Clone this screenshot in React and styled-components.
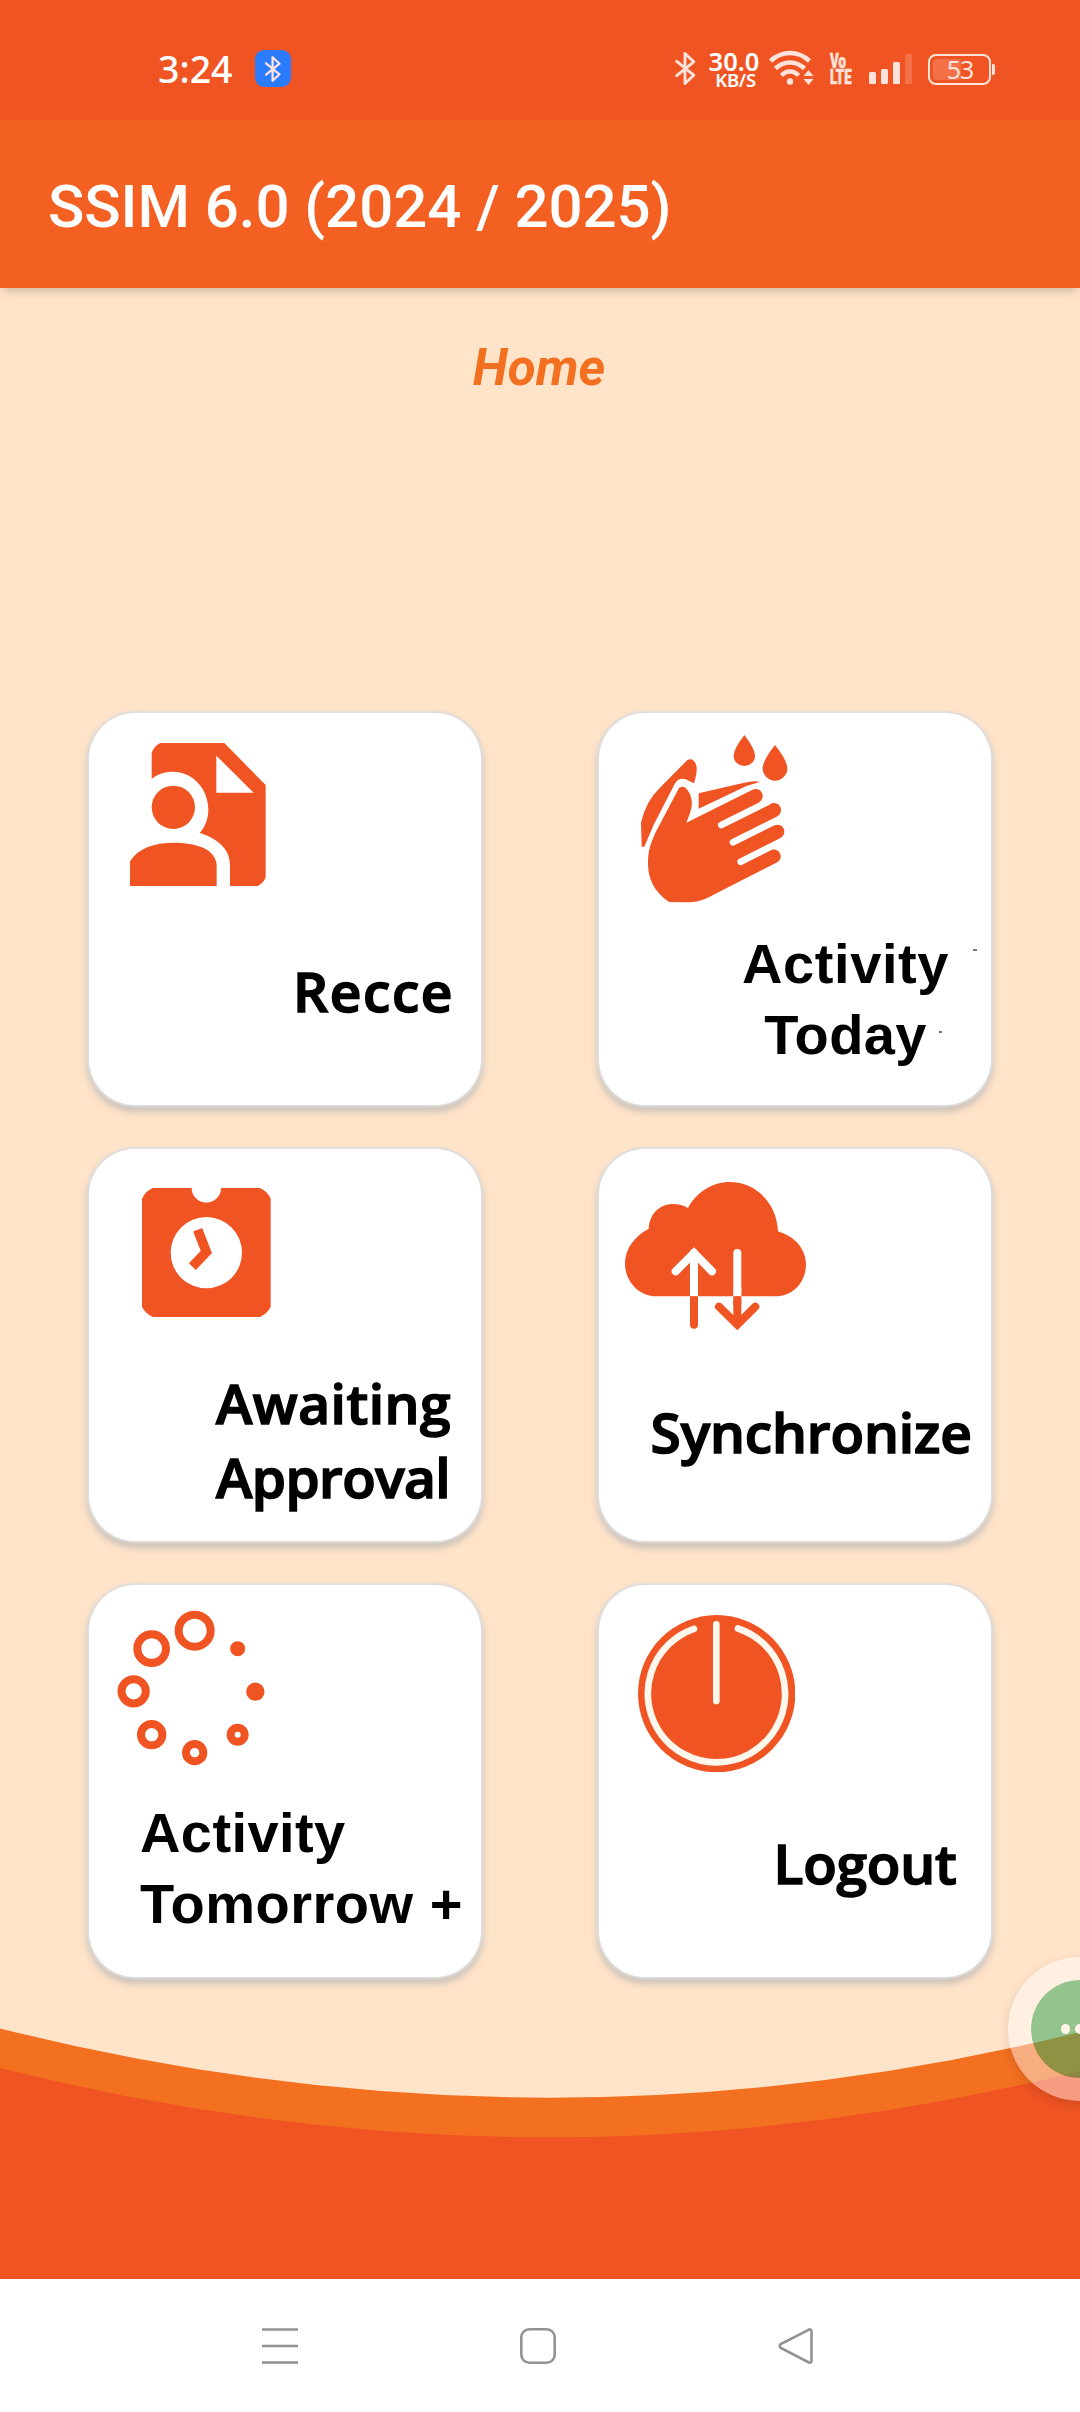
import styled, { createGlobalStyle } from "styled-components";

const RED = "#f05423";

const tiles = [
  {
    icon: RecceIcon,
    iconX: 41,
    iconY: 30,
    x: 204,
    y: 240.5,
    lines: [{ text: "Recce", spacing: 1.6 }],
  },
  {
    icon: HandsIcon,
    iconX: 41,
    iconY: 21,
    x: 143,
    y: 214.5,
    arial: true,
    center: true,
    specks: true,
    lines: [
      { text: "Activity", spacing: 0.6 },
      { text: "Today", spacing: 0.4 },
    ],
  },
  {
    icon: ApprovalIcon,
    iconX: 53,
    iconY: 39,
    x: 127,
    y: 216.5,
    lines: [
      { text: "Awaiting", spacing: 0.5 },
      { text: "Approval", spacing: -0.6 },
    ],
  },
  {
    icon: CloudIcon,
    iconX: 26,
    iconY: 33,
    x: 51.5,
    y: 245.5,
    lines: [{ text: "Synchronize", spacing: -0.1 }],
  },
  {
    icon: DotsIcon,
    iconX: 28,
    iconY: 25,
    x: 51,
    y: 211.5,
    arial: true,
    lines: [
      { text: "Activity", spacing: 0.4 },
      { text: "Tomorrow +", spacing: 0.5 },
    ],
  },
  {
    icon: PowerIcon,
    iconX: 39,
    iconY: 30,
    x: 174.5,
    y: 240.5,
    lines: [{ text: "Logout", spacing: -0.2 }],
  },
];

export default function App() {
  return (
    <Screen>
      <GlobalStyle />
      <StatusBar />
      <AppBar>SSIM 6.0 (2024 / 2025)</AppBar>
      <Main>
        <Heading>Home</Heading>
        <Grid>
          {tiles.map((tile, i) => {
            const Icon = tile.icon;
            return (
              <Tile key={i}>
                <IconBox $x={tile.iconX} $y={tile.iconY}>
                  <Icon />
                </IconBox>
                <Label
                  $x={tile.x}
                  $y={tile.y}
                  $arial={tile.arial}
                  $center={tile.center}
                >
                  {tile.lines.map((line) => (
                    <Line key={line.text} $spacing={line.spacing}>
                      {line.text}
                    </Line>
                  ))}
                </Label>
                {tile.specks && (
                  <>
                    <Speck $x={374} $y={236} $w={4} />
                    <Speck $x={340} $y={318} $w={3} />
                  </>
                )}
              </Tile>
            );
          })}
        </Grid>
        <Wave viewBox="0 0 1080 251">
          <path d="M0 0.5Q545 137 1080 4V251H0Z" fill="#f37021" />
          <path d="M0 40Q545 177 1080 43V251H0Z" fill={RED} />
        </Wave>
      </Main>
      <NavBar>
        <svg width="36" height="36" viewBox="0 0 36 36">
          <path d="M0 1.5H36M0 18H36M0 34.5H36" />
        </svg>
        <svg width="36" height="36" viewBox="0 0 36 36">
          <rect x="1.3" y="1.3" width="33.4" height="33.4" rx="8" />
        </svg>
        <svg width="36" height="36" viewBox="0 0 36 36">
          <path d="M30.5 1.8L2.8 16Q0.8 18 2.8 20L30.5 34.2Q33.5 35.5 33.5 32.5V3.5Q33.5 0.5 30.5 1.8Z" />
        </svg>
      </NavBar>
      <Bubble>
        <i />
        <i />
        <i />
      </Bubble>
    </Screen>
  );
}

function StatusBar() {
  return (
    <Status>
      <Clock>3:24</Clock>
      <Badge>
        <svg width="18" height="26" viewBox="0 0 20 32">
          <BluetoothPath />
        </svg>
      </Badge>
      <Tray>
        <svg width="21" height="33" viewBox="0 0 20 32">
          <BluetoothPath />
        </svg>
        <Speed>
          <b>30.0</b>
          <span>KB/S</span>
        </Speed>
        <svg width="46" height="36" viewBox="0 0 46 36">
          <g fill="none" stroke="#ffe3da" strokeWidth="4.6">
            <path d="M1.5 11Q10 3 21 3T40.5 11" />
            <path d="M6.5 18.5Q13 12.5 21 12.5T35.5 18.5" />
            <path d="M12.5 25.5Q16 21.5 21 21.5T29.5 25.5" />
          </g>
          <circle cx="21" cy="31.5" r="3.2" fill="#ffe3da" />
          <path d="M39.5 20L44.5 26H34.5ZM39.5 35L44.5 29H34.5Z" fill="#ffe3da" />
        </svg>
        <Volte>
          <span>Vo</span>
          <span>LTE</span>
        </Volte>
        <Bars>
          <Bar $h={12} />
          <Bar $h={15} />
          <Bar $h={22} />
          <Bar $h={30} $off />
        </Bars>
        <Battery>
          <Charge>53</Charge>
        </Battery>
        <Nub />
      </Tray>
    </Status>
  );
}

function BluetoothPath() {
  return (
    <path
      d="M1.5 9L18 22.5L9.5 30.5V1.5L18 9.5L1.5 23"
      fill="none"
      stroke="#ffe3da"
      strokeWidth="2.8"
      strokeLinejoin="round"
      strokeLinecap="round"
    />
  );
}

function RecceIcon() {
  return (
    <svg width="136" height="143.3" viewBox="181 130 408 430" fill={RED}>
      <path
        fillRule="evenodd"
        d="M246 160Q252 140 272 130H464L588 256V532Q582 552 562 560H481V495C481 440 430 412 390 400C425 360 422 305 397 265C362 210 290 202 246 238ZM440 168V279H552Z"
      />
      <circle cx="311" cy="323" r="65" />
      <path d="M181 560V485C205 445 255 429 311 429C380 429 441 448 441 500V560Z" />
    </svg>
  );
}

function HandsIcon() {
  return (
    <svg width="147.7" height="169" viewBox="181 100 443 507" fill={RED}>
      <path d="M494 103Q526 145 526 165A32 31 0 0 1 462 165Q462 145 494 103Z" />
      <path d="M586 133Q623 180 623 203A37 37 0 0 1 549 203Q549 180 586 133Z" />
      <path d="M324 177Q343 170 350 195Q354 212 343 248L318 236Q296 230 285 250L222 372L194 438H186L184 365Q200 300 240 262Z" />
      <path d="M357 278L490 247Q525 239 540 244L500 256L357 324Z" />
      <path d="M298 262Q314 250 328 275C344 305 335 330 320 366L518.6 267.2A21 21 0 0 1 537.4 304.8L573.6 309.2A21 21 0 0 1 592.4 346.8L583.6 374.2A21 21 0 0 1 602.4 411.8L572.6 448.2A21 21 0 0 1 591.4 485.8L400 583C370 600 350 605 320 605L268 604C225 575 205 535 205 490C205 450 212 430 228 395Z" />
      <path
        d="M425 373L565 303M460 425L622 344M483 483L622 413.5"
        fill="none"
        stroke="#fff"
        strokeWidth="20"
        strokeLinecap="round"
      />
    </svg>
  );
}

function ApprovalIcon() {
  return (
    <svg width="128.7" height="129" viewBox="217 158 386 387" fill={RED}>
      <path d="M250 158H366A44 44 0 0 0 454 158H570Q592 166 603 190V515Q592 536 570 545H250Q228 536 217 515V190Q228 166 250 158Z" />
      <circle cx="410" cy="352" r="107" fill="#fff" />
      <path
        d="M384 283L410 350L368 394"
        fill="none"
        stroke={RED}
        strokeWidth="29"
      />
    </svg>
  );
}

function CloudIcon() {
  return (
    <svg width="181.3" height="148" viewBox="136 140 544 444" fill="none">
      <path
        d="M230 483C175 483 136 435 136 385C136 340 165 303 207 280C210 230 245 206 280 206Q305 206 325 218C350 170 400 140 450 140C530 140 592 205 595 288C650 305 679 345 679 387C679 440 640 483 588 483Z"
        fill={RED}
      />
      <g strokeWidth="24" strokeLinecap="round">
        <path d="M343 495V568M473 495V560M418 514L473 568L527 514" stroke={RED} />
        <path d="M288 408L343 353L397 408" stroke="#fff" />
        <path d="M343 353V470M473 353V470" stroke="#fff" />
      </g>
      <path d="M343 460V483M473 460V483" stroke="#fff" strokeWidth="24" />
      <path d="M343 483V510M473 483V510" stroke={RED} strokeWidth="24" />
    </svg>
  );
}

function DotsIcon() {
  return (
    <svg
      width="149"
      height="156"
      viewBox="142 119 447 468"
      fill="none"
      stroke={RED}
      strokeWidth="24"
    >
      <circle cx="375" cy="181" r="48" />
      <circle cx="246" cy="235" r="43" />
      <circle cx="192" cy="363" r="36.5" />
      <circle cx="246" cy="493" r="32" />
      <circle cx="375" cy="547" r="26" />
      <circle cx="504" cy="493" r="21" />
      <circle cx="557" cy="364" r="14" strokeWidth="27" />
      <circle cx="504" cy="235" r="11" strokeWidth="23" />
    </svg>
  );
}

function PowerIcon() {
  return (
    <svg width="157.3" height="157.3" viewBox="175 135 472 472" fill="none">
      <circle cx="411" cy="371" r="236" fill={RED} />
      <path
        d="M343 176.5A206 206 0 1 0 475 175.5M410 163V393"
        stroke="#fff6ec"
        strokeWidth="20"
        strokeLinecap="round"
      />
    </svg>
  );
}

const GlobalStyle = createGlobalStyle`
  body {
    margin: 0;
  }
  svg {
    display: block;
    flex-shrink: 0;
  }
`;

const Screen = styled.div`
  position: relative;
  display: flex;
  flex-direction: column;
  width: 1080px;
  height: 2412px;
  overflow: hidden;
  background: #fff;
  font-family: Roboto, sans-serif;
`;

const Status = styled.div`
  display: flex;
  align-items: flex-start;
  box-sizing: border-box;
  height: 120px;
  padding: 50px 85px 0 158px;
  background: ${RED};
  color: #fff;
`;

const Clock = styled.div`
  width: 97px;
  font-family: "Noto Sans", sans-serif;
  font-size: 37.5px;
  font-weight: 500;
  line-height: 37px;
`;

const Badge = styled.div`
  display: flex;
  align-items: center;
  justify-content: center;
  width: 36px;
  height: 37px;
  border-radius: 9px;
  background: #2b7bff;
`;

const Tray = styled.div`
  display: flex;
  align-items: flex-start;
  margin-left: auto;

  & > svg:first-child {
    margin: 2px 12px 0 0;
  }
`;

const Speed = styled.div`
  display: flex;
  flex-direction: column;
  align-items: center;
  width: 52px;
  margin-right: 9px;
  font-family: "Noto Sans", sans-serif;
  white-space: nowrap;

  & b {
    font-size: 25.5px;
    font-weight: 600;
    line-height: 23px;
  }
  & span {
    padding-left: 3px;
    font-size: 18.5px;
    font-weight: 600;
    line-height: 14px;
    letter-spacing: -0.3px;
  }
`;

const Volte = styled.div`
  display: flex;
  flex-direction: column;
  width: 22px;
  margin: 3px 17px 0 15px;
  color: #ffe3da;
  font-size: 20px;
  font-weight: 900;
  line-height: 16px;
  -webkit-text-stroke: 0.6px #ffe3da;
  transform: scaleX(0.66);
  transform-origin: left;
`;

const Bars = styled.div`
  display: flex;
  align-items: flex-end;
  gap: 5px;
  height: 34px;
  margin-right: 16px;
`;

const Bar = styled.div`
  width: 7px;
  height: ${(p) => p.$h}px;
  border-radius: 1.5px;
  background: ${(p) => (p.$off ? "#f4714a" : "#ffe3da")};
`;

const Battery = styled.div`
  box-sizing: border-box;
  width: 63px;
  height: 31px;
  margin-top: 4px;
  padding: 3px;
  border: 2px solid #ffe3da;
  border-radius: 8px;
`;

const Charge = styled.div`
  height: 21px;
  padding-left: 1px;
  border-radius: 4px;
  background: linear-gradient(90deg, #f37048 53%, transparent 53%);
  color: #ffe3da;
  font-family: "Noto Sans", sans-serif;
  font-size: 25px;
  line-height: 20px;
  text-align: center;
  letter-spacing: -1px;
`;

const Nub = styled.div`
  width: 3px;
  height: 11px;
  margin: 14px 0 0 1px;
  border-radius: 0 2px 2px 0;
  background: #ffe3da;
`;

const AppBar = styled.div`
  z-index: 1;
  height: 168px;
  padding-left: 48px;
  background: #f36022;
  box-shadow: 0 6px 9px -3px rgba(0, 0, 0, 0.2);
  color: #fff;
  font-size: 60px;
  font-weight: 500;
  line-height: 173px;
  letter-spacing: -0.05px;
`;

const Main = styled.div`
  display: flex;
  flex-direction: column;
  align-items: center;
  height: 1991px;
  background: #ffe4ca;
`;

const Heading = styled.div`
  height: 425px;
  padding-right: 2px;
  color: #f37021;
  font-size: 51px;
  font-style: italic;
  font-weight: 700;
  line-height: 160px;
`;

const Grid = styled.div`
  display: grid;
  grid-template-columns: 392px 392px;
  grid-auto-rows: 392px;
  gap: 44px 118px;
`;

const Tile = styled.div`
  position: relative;
  display: grid;
  justify-items: start;
  align-items: start;
  box-sizing: border-box;
  border-radius: 46px;
  background: #fff;
  box-shadow: 0 0 2px 2px #dfdedd, 0 5px 7px 2px rgba(140, 150, 165, 0.45);

  & > * {
    grid-area: 1 / 1;
  }
`;

const IconBox = styled.div`
  padding: ${(p) => p.$y}px 0 0 ${(p) => p.$x}px;
`;

const Label = styled.div`
  display: flex;
  flex-direction: column;
  align-items: ${(p) => (p.$center ? "center" : "flex-start")};
  padding: ${(p) => p.$y}px 0 0 ${(p) => p.$x}px;
  color: #000;
  font-family: ${(p) =>
    p.$arial ? `"Liberation Sans", sans-serif` : `"Open Sans", sans-serif`};
  font-size: ${(p) => (p.$arial ? 56 : 55)}px;
  font-weight: ${(p) => (p.$arial ? 700 : 600)};
  line-height: ${(p) => (p.$arial ? 71.5 : 74.7)}px;
  -webkit-text-stroke: ${(p) => (p.$arial ? 0 : 1.6)}px #000;
  white-space: nowrap;
`;

const Line = styled.span`
  letter-spacing: ${(p) => p.$spacing}px;
`;

/* stray marks next to the "Activity Today" label */
const Speck = styled.div`
  position: absolute;
  top: ${(p) => p.$y}px;
  left: ${(p) => p.$x}px;
  width: ${(p) => p.$w}px;
  height: 2px;
  background: #777;
`;

const Wave = styled.svg`
  width: 1080px;
  height: 251px;
  margin-top: auto;
`;

const NavBar = styled.div`
  display: flex;
  align-items: center;
  gap: 222px;
  flex: 1;
  padding-left: 262px;

  & svg {
    fill: none;
    stroke: #939393;
    stroke-width: 2.6;
  }
`;

/* floating chat head, half off the right edge */
const Bubble = styled.div`
  position: absolute;
  top: 1957px;
  right: -72px;
  display: flex;
  align-items: center;
  justify-content: center;
  gap: 5px;
  width: 98px;
  height: 98px;
  border: 23px solid rgba(255, 255, 255, 0.43);
  border-radius: 50%;
  background: rgba(64, 171, 95, 0.56) padding-box;
  box-shadow: 0 4px 12px rgba(0, 0, 0, 0.12);

  & i {
    width: 9.5px;
    height: 9.5px;
    border-radius: 50%;
    background: #fff3e8;
  }
`;
